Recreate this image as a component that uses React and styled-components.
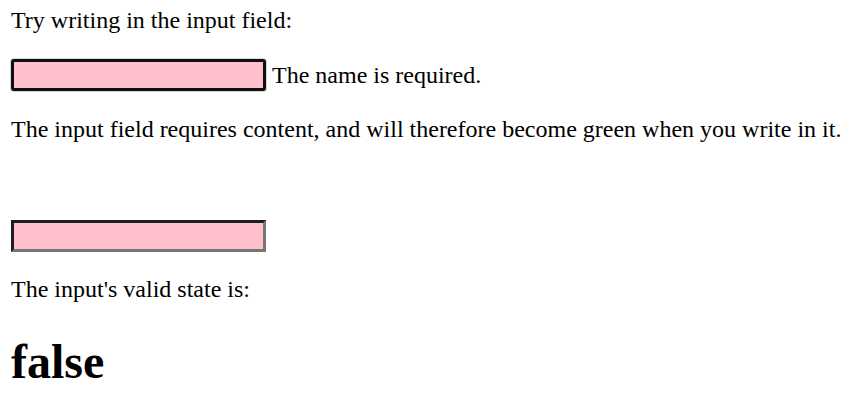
import styled, { createGlobalStyle } from "styled-components";

const Global = createGlobalStyle`
    body {
        margin: 0;
        background: #ffffff;
        color: #000000;
        font-family: "Liberation Serif", "Times New Roman", serif;
    }
`

const Page = styled.div`
    display: flex;
    flex-direction: column;
    align-items: flex-start;
    padding: 7px 11px;
`

const Text = styled.p`
    margin: ${({top}) => top || 0}px 0 0 0;
    font-size: 24px;
    line-height: 27px;
    white-space: nowrap;
`

const Row = styled.div`
    display: flex;
    align-items: center;
    gap: 6px;
    margin-top: ${({top}) => top}px;
    font-size: 24px;
    line-height: 27px;
`

const Field = styled.input`
    box-sizing: border-box;
    width: 255px;
    height: 32px;
    margin: 0;
    padding: 0;
    background: #ffc0cb;
    font-size: 20px;
    outline: none;
    ${({focused}) => focused ? `
        border: 3px solid #101010;
        border-radius: 3px;
        box-shadow: 0 0 0 1px #d8d8d8;
    ` : `
        border-style: solid;
        border-width: 3px;
        border-color: #1e1e1e #767676 #767676 #1e1e1e;
        border-radius: 0;
    `}
`

const Result = styled.h1`
    margin: 31px 0 0 0;
    font-size: 48px;
    line-height: 55px;
    font-weight: bold;
`

export default function App() {
    return (
        <Page>
            <Global/>
            <Text>Try writing in the input field:</Text>
            <Row top={25}>
                <Field focused type="text" readOnly/>
                <span>The name is required.</span>
            </Row>
            <Text top={25}>The input field requires content, and will therefore become green when you write in it.</Text>
            <Row top={77}>
                <Field type="text" readOnly/>
            </Row>
            <Text top={24}>The input's valid state is:</Text>
            <Result>false</Result>
        </Page>
    )
}
